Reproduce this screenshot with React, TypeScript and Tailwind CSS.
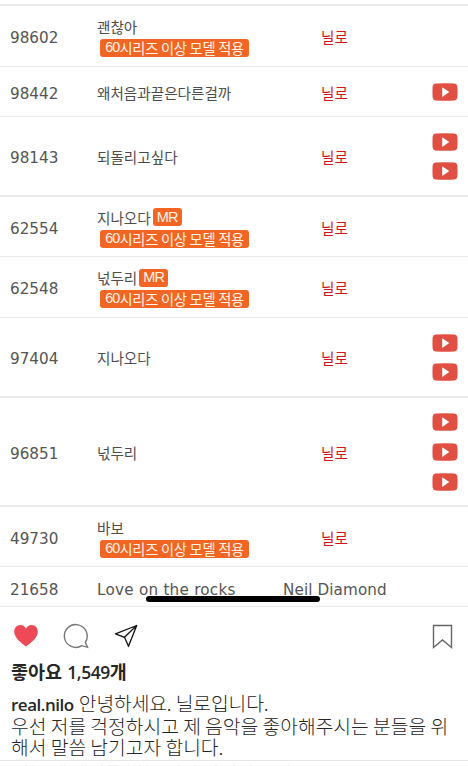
import clsx from 'clsx'

type Song = {
  id: string
  title: string
  singer: string
  mr?: boolean
  series?: boolean
  videos?: number
  height: string
}

const songs: Song[] = [
  { id: '98602', title: '괜찮아', singer: '닐로', series: true, height: 'h-[61px] border-b' },
  { id: '98442', title: '왜처음과끝은다른걸까', singer: '닐로', videos: 1, height: 'h-[50px] border-b' },
  { id: '98143', title: '되돌리고싶다', singer: '닐로', videos: 2, height: 'h-[80px] border-b-2' },
  { id: '62554', title: '지나오다', singer: '닐로', mr: true, series: true, height: 'h-[60px] border-b' },
  { id: '62548', title: '넋두리', singer: '닐로', mr: true, series: true, height: 'h-[61px] border-b' },
  { id: '97404', title: '지나오다', singer: '닐로', videos: 2, height: 'h-[80px] border-b-2' },
  { id: '96851', title: '넋두리', singer: '닐로', videos: 3, height: 'h-[109px] border-b-2' },
  { id: '49730', title: '바보', singer: '닐로', series: true, height: 'h-[60px] border-b' },
]

function PlayIcon() {
  return (
    <svg className="block h-[18px] w-[26px]" viewBox="0 0 26 18">
      <path d="M3.5.5Q13-.1 22.5.5Q25 .7 25.3 3.2Q25.8 9 25.3 14.8Q25 17.3 22.5 17.5Q13 18.1 3.5 17.5Q1 17.3.7 14.8Q.2 9 .7 3.2Q1 .7 3.5.5Z" fill="#e04f42" />
      <path d="M10.2 4.3v9.6L17.3 9z" fill="#fff" />
    </svg>
  )
}

function SongRow({ song }: { song: Song }) {
  return (
    <div className={clsx('flex shrink-0 items-center border-[#ebebeb] pt-px', song.height)}>
      <div className="w-[97px] pl-[10px] pt-[4px] font-['DejaVu_Sans',sans-serif] text-[15.2px] text-[#555]">{song.id}</div>
      <div className="w-[224px] text-[14.6px] leading-[21px] text-[#4d4d4d]">
        <div className="flex items-center">
          <span>{song.title}</span>
          {song.mr && (
            <span className="ml-[2px] flex h-[18px] w-[29px] items-center justify-center rounded-[3px] bg-[#f26522] font-['Liberation_Sans',sans-serif] text-[14.5px] tracking-[-0.8px] text-[#fff3e8]">MR</span>
          )}
        </div>
        {song.series && (
          <div className="ml-[3px] mt-[2px] flex h-[18px] w-[149px] items-center justify-center whitespace-nowrap rounded-[3px] bg-[#f26522] pb-px text-[14.3px] tracking-[-0.3px] text-[#fff3e8]">
            <span className="font-['Liberation_Sans',sans-serif] tracking-[-0.8px]">60</span>시리즈 이상 모델 적용
          </div>
        )}
      </div>
      <div className="w-[111px] pt-px text-[14.6px] text-[#cf1620]">{song.singer}</div>
      <div className="flex flex-col gap-[11.7px]">
        {Array.from({ length: song.videos ?? 0 }, (_, i) => <PlayIcon key={i} />)}
      </div>
    </div>
  )
}

export default function App() {
  return (
    <div className="flex h-[766px] w-[468px] flex-col overflow-hidden bg-white font-['Noto_Sans_CJK_KR',sans-serif]">
      <div className="h-[6px] shrink-0 border-b-2 border-[#ebebeb]" />
      {songs.map((song) => <SongRow key={song.id} song={song} />)}
      <div className="relative flex h-[40px] shrink-0 items-center border-b border-[#ebebeb] pt-[7px] font-['DejaVu_Sans',sans-serif] text-[15.2px] text-[#555]">
        <span className="w-[97px] pl-[10px]">21658</span>
        <span className="w-[186px] tracking-[0.25px]">Love on the rocks</span>
        <span className="tracking-[0.1px]">Neil Diamond</span>
        <div className="absolute bottom-[4px] left-[146px] h-[6px] w-[174px] rounded-full bg-black" />
      </div>

      <div className="flex h-[54px] shrink-0 items-center pl-[13px] pr-[15px] pt-[4px]">
        <svg className="h-[24px] w-[26px]" viewBox="0 0 26 24">
          <path d="M13 22.5C10 20 1.2 14.5 1.2 7.7C1.2 3.8 3.9 1 7.3 1C10 1 12 2.6 13 4.7C14 2.6 16 1 18.7 1C22.1 1 24.8 3.8 24.8 7.7C24.8 14.5 16 20 13 22.5Z" fill="#ed4956" />
        </svg>
        <svg className="ml-[24px] h-[26px] w-[26px]" viewBox="0 0 26 26" fill="none" stroke="#777" strokeWidth="1.4">
          <path d="M22.3 19.3A11.4 11.4 0 1 0 18.8 22.7L24.5 24.3Z" />
        </svg>
        <svg className="ml-[25px] h-[24px] w-[24px]" viewBox="0 0 24 24" fill="none" stroke="#111" strokeWidth="1.3" strokeLinejoin="round">
          <path d="M22.7 1.5L1.5 9.8L10.5 13.3L14.5 22.3ZM10.5 13.3L22.7 1.5" />
        </svg>
        <svg className="ml-auto h-[25px] w-[21px]" viewBox="0 0 21 25" fill="none" stroke="#666" strokeWidth="1.4">
          <path d="M1.5 1.5H19.5V23.5L10.5 16L1.5 23.5Z" />
        </svg>
      </div>

      <div className="h-[32px] shrink-0 pl-[11px] text-[18.5px] font-bold leading-[20px] text-[#262626]">
        좋아요 <span className="ml-px font-['Open_Sans',sans-serif] text-[17.5px] font-semibold tracking-[-0.45px]">1,549</span>개
      </div>
      <div className="h-[68px] shrink-0 whitespace-nowrap border-b border-[#e6e6e6] pl-[11px] text-[19.25px] font-light leading-[21.5px] text-[#262626]">
        <div><span className="mr-px font-['Open_Sans',sans-serif] text-[17px] font-semibold tracking-[-0.5px]">real.nilo</span> <span className="tracking-[-0.1px]">안녕하세요. 닐로입니다.</span></div>
        <div>우선 저를 걱정하시고 제 음악을 좋아해주시는 분들을 위</div>
        <div>해서 말씀 남기고자 합니다.</div>
      </div>
      <div className="h-[5px] shrink-0 overflow-hidden whitespace-nowrap pl-[12px] text-[18.5px] font-light leading-[23px] text-[#f1f1f1]">
        저는 제 얘기를 하는 것이 안정된 스킨도
      </div>
    </div>
  )
}
